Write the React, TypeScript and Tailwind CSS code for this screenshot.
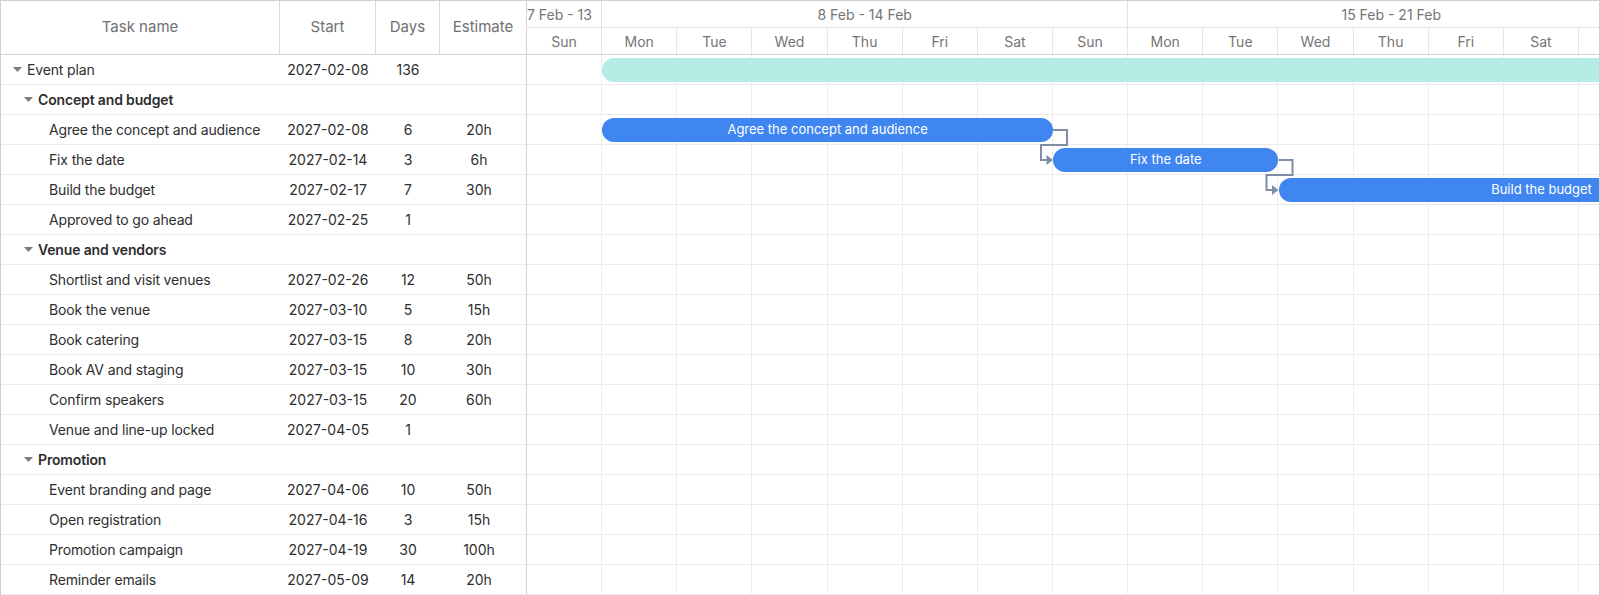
import React from "react";

type Row = {
  name: string;
  start?: string;
  days?: string;
  est?: string;
  level: number;
  kind: "project" | "group" | "task";
};

type Bar = {
  row: number;
  from: number;
  len: number;
  label?: string;
  summary?: boolean;
};

const DAY = 75.15;

const rows: Row[] = [
  { name: "Event plan", start: "2027-02-08", days: "136", level: 0, kind: "project" },
  { name: "Concept and budget", level: 1, kind: "group" },
  { name: "Agree the concept and audience", start: "2027-02-08", days: "6", est: "20h", level: 2, kind: "task" },
  { name: "Fix the date", start: "2027-02-14", days: "3", est: "6h", level: 2, kind: "task" },
  { name: "Build the budget", start: "2027-02-17", days: "7", est: "30h", level: 2, kind: "task" },
  { name: "Approved to go ahead", start: "2027-02-25", days: "1", level: 2, kind: "task" },
  { name: "Venue and vendors", level: 1, kind: "group" },
  { name: "Shortlist and visit venues", start: "2027-02-26", days: "12", est: "50h", level: 2, kind: "task" },
  { name: "Book the venue", start: "2027-03-10", days: "5", est: "15h", level: 2, kind: "task" },
  { name: "Book catering", start: "2027-03-15", days: "8", est: "20h", level: 2, kind: "task" },
  { name: "Book AV and staging", start: "2027-03-15", days: "10", est: "30h", level: 2, kind: "task" },
  { name: "Confirm speakers", start: "2027-03-15", days: "20", est: "60h", level: 2, kind: "task" },
  { name: "Venue and line-up locked", start: "2027-04-05", days: "1", level: 2, kind: "task" },
  { name: "Promotion", level: 1, kind: "group" },
  { name: "Event branding and page", start: "2027-04-06", days: "10", est: "50h", level: 2, kind: "task" },
  { name: "Open registration", start: "2027-04-16", days: "3", est: "15h", level: 2, kind: "task" },
  { name: "Promotion campaign", start: "2027-04-19", days: "30", est: "100h", level: 2, kind: "task" },
  { name: "Reminder emails", start: "2027-05-09", days: "14", est: "20h", level: 2, kind: "task" },
];

const bars: Bar[] = [
  { row: 0, from: 1, len: 136, summary: true },
  { row: 2, from: 1, len: 6, label: "Agree the concept and audience" },
  { row: 3, from: 7, len: 3, label: "Fix the date" },
  { row: 4, from: 10, len: 7, label: "Build the budget" },
];

const dayNames = ["Sun", "Mon", "Tue", "Wed", "Thu", "Fri", "Sat", "Sun", "Mon", "Tue", "Wed", "Thu", "Fri", "Sat", "Sun"];

const indent = ["pl-[12px]", "pl-[23px]", "pl-[34px]"];

function Caret() {
  return (
    <svg width="9" height="5" viewBox="0 0 9 5" className="shrink-0">
      <path d="M0 0H9L4.5 5Z" fill="#7c7c7c" />
    </svg>
  );
}

function GridPane() {
  return (
    <div className="w-[526px] shrink-0 border-r border-[#d2d2d2] flex flex-col">
      <div className="h-[54px] flex border-b border-[#d4d4d4] text-[15px] text-[#707070]">
        <div className="w-[279px] border-r border-[#dadada] flex items-center justify-center">Task name</div>
        <div className="w-[96px] border-r border-[#dadada] flex items-center justify-center">Start</div>
        <div className="w-[64px] border-r border-[#dadada] flex items-center justify-center">Days</div>
        <div className="w-[86px] flex items-center justify-center">Estimate</div>
      </div>
      {rows.map((r, i) => (
        <div key={i} className="h-[30px] flex items-center border-b border-[#ebebeb] text-[14px] text-[#2e2e2e]">
          <div className={`w-[279px] flex items-center ${indent[r.level]}`}>
            {r.kind === "task" ? <span className="w-[9px] shrink-0" /> : <Caret />}
            <span className={`ml-[5px] whitespace-nowrap tracking-[-0.15px] ${r.kind === "group" ? "font-semibold" : ""}`}>
              {r.name}
            </span>
          </div>
          <div className="w-[96px] text-center">{r.start}</div>
          <div className="w-[64px] text-center">{r.days}</div>
          <div className="w-[86px] text-center pr-[8px]">{r.est}</div>
        </div>
      ))}
    </div>
  );
}

function Timeline() {
  return (
    <div className="flex-1 overflow-hidden">
      <div className="w-[1128px] flex flex-col">
        <div className="h-[27px] flex border-b border-[#e2e2e2] text-[14px] text-[#757575]">
          <div className="w-[75.15px] shrink-0 border-r border-[#e2e2e2] overflow-hidden whitespace-nowrap flex items-center">7 Feb - 13</div>
          <div className="w-[526.05px] shrink-0 border-r border-[#e2e2e2] flex items-center justify-center">8 Feb - 14 Feb</div>
          <div className="w-[526.05px] shrink-0 flex items-center justify-center">15 Feb - 21 Feb</div>
        </div>
        <div className="h-[27px] flex border-b border-[#d4d4d4] text-[14px] text-[#757575]">
          {dayNames.map((d, i) => (
            <div key={i} className="w-[75.15px] shrink-0 border-r border-[#e6e6e6] flex items-center justify-center">
              {d}
            </div>
          ))}
        </div>
        <div className="relative">
          {rows.map((_, ri) => (
            <div key={ri} className="relative h-[30px] flex border-b border-[#ebebeb]">
              {dayNames.map((_, di) => (
                <div key={di} className="w-[75.15px] shrink-0 border-r border-[#ededed]" />
              ))}
              {bars
                .filter((b) => b.row === ri)
                .map((b, bi) => (
                  <div
                    key={bi}
                    className={`absolute top-[3px] h-[24px] rounded-full flex items-center justify-center text-[13px] text-white whitespace-nowrap ${
                      b.summary ? "bg-[#b5ece5]" : "bg-[#3f86f1]"
                    }`}
                    style={{ left: b.from * DAY, width: b.len * DAY }}
                  >
                    {b.label}
                  </div>
                ))}
            </div>
          ))}
          <svg className="absolute left-0 top-0 pointer-events-none" width="1128" height="200">
            <g fill="none" stroke="#7f8ea4" strokeWidth="2">
              <path d="M526 75H540V90H514V105H520" />
              <path d="M751.5 105H765.5V120H739.5V135H745.5" />
            </g>
            <g fill="#7f8ea4">
              <path d="M519.5 100L526 105L519.5 110Z" />
              <path d="M745 130L751.5 135L745 140Z" />
            </g>
          </svg>
        </div>
      </div>
    </div>
  );
}

export default function App() {
  return (
    <div className="w-[1600px] h-[595px] overflow-hidden bg-white font-['Inter','Noto_Sans',sans-serif]">
      <div className="h-[600px] flex border border-[#d0d0d0]">
        <GridPane />
        <Timeline />
      </div>
    </div>
  );
}
